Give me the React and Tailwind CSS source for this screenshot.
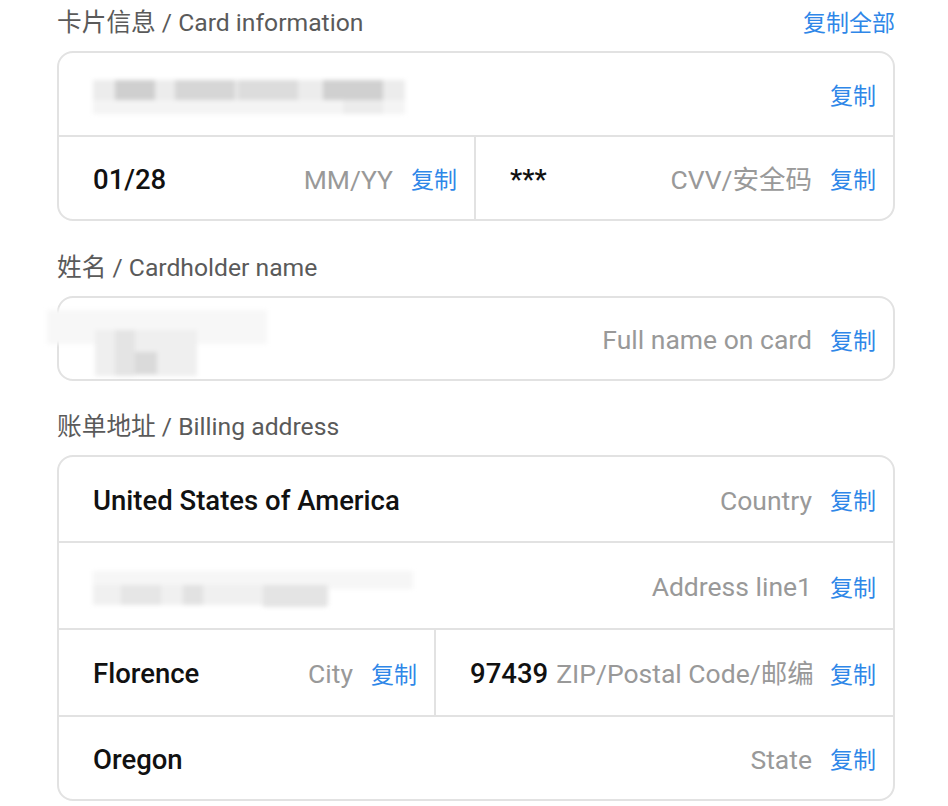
const font = { fontFamily: 'Roboto, "Noto Sans CJK SC", sans-serif' };

function CopyButton() {
  return (
    <button type="button" className="shrink-0 pt-[5px] text-[23px] leading-none text-[#2f87e8]">
      复制
    </button>
  );
}

function Field({ value, placeholder, children, className = "" }) {
  return (
    <div className={`flex h-full min-w-0 items-center pl-[34px] pr-[17px] pt-[3px] ${className}`}>
      {children ?? (
        <span className="shrink-0 whitespace-nowrap text-[27.5px] font-medium text-[#111]">{value}</span>
      )}
      <span className="min-w-0 flex-1 whitespace-nowrap pl-2 text-right text-[26.5px] text-[#999]">
        {placeholder}
      </span>
      <span className="ml-[18px]">
        <CopyButton />
      </span>
    </div>
  );
}

function Blur({ blocks, className = "" }) {
  return (
    <div className={`relative h-[44px] shrink-0 blur-[2px] ${className}`}>
      {blocks.map(([l, t, w, h, c], i) => (
        <div
          key={i}
          className="absolute"
          style={{ left: l, top: t, width: w, height: h, background: c }}
        />
      ))}
    </div>
  );
}

function SectionLabel({ children, right }) {
  return (
    <div className="mb-[12px] flex h-8 items-center justify-between">
      <h2 className="text-[24.7px] leading-8 text-[#5a5a5a]">{children}</h2>
      {right}
    </div>
  );
}

export default function App() {
  return (
    <main style={font} className="min-h-screen w-[948px] bg-white pl-[57px] pr-[53px] pt-[7px] pb-2">
      <section>
        <SectionLabel
          right={
            <button type="button" className="pt-[2px] text-[23px] text-[#2f87e8]">
              复制全部
            </button>
          }
        >
          卡片信息 / Card information
        </SectionLabel>
        <div className="h-[170px] overflow-hidden rounded-2xl border-2 border-[#e2e2e2]">
          <div className="h-[84px] border-b-2 border-[#e2e2e2]">
            <Field placeholder="" className="pl-[24px]">
              <Blur
                className="w-[312px]"
                blocks={[
                  [0, 6, 312, 22, "#ececec"],
                  [22, 6, 40, 20, "#cfcfcf"],
                  [82, 6, 60, 20, "#d6d6d6"],
                  [145, 6, 60, 20, "#dcdcdc"],
                  [230, 6, 60, 20, "#d0d0d0"],
                  [0, 26, 312, 14, "#f4f4f4"],
                  [250, 26, 40, 14, "#ececec"],
                ]}
              />
            </Field>
          </div>
          <div className="grid h-[82px] grid-cols-2">
            <Field value="01/28" placeholder="MM/YY" className="border-r-2 border-[#e2e2e2]" />
            <Field value="***" placeholder="CVV/安全码" className="pl-[33px]" />
          </div>
        </div>
      </section>

      <section className="mt-[31px]">
        <SectionLabel>姓名 / Cardholder name</SectionLabel>
        <div className="h-[85px] rounded-2xl border-2 border-[#e2e2e2]">
          <Field placeholder="Full name on card" className="pl-[24px]">
            <Blur
              className="-ml-[46px] h-[80px] w-[220px]"
              blocks={[
                [0, 10, 220, 34, "#f7f7f7"],
                [48, 30, 102, 46, "#efefef"],
                [68, 30, 20, 46, "#e4e4e4"],
                [88, 52, 22, 22, "#dadada"],
              ]}
            />
          </Field>
        </div>
      </section>

      <section className="mt-[30px]">
        <SectionLabel>账单地址 / Billing address</SectionLabel>
        <div className="h-[346px] overflow-hidden rounded-2xl border-2 border-[#e2e2e2]">
          <div className="h-[86px] border-b-2 border-[#e2e2e2]">
            <Field value="United States of America" placeholder="Country" />
          </div>
          <div className="h-[87px] border-b-2 border-[#e2e2e2]">
            <Field placeholder="Address line1" className="pl-[18px]">
              <Blur
                className="w-[320px]"
                blocks={[
                  [0, 6, 320, 18, "#f6f6f6"],
                  [0, 20, 236, 20, "#f0f0f0"],
                  [28, 20, 40, 20, "#e6e6e6"],
                  [90, 20, 20, 20, "#e2e2e2"],
                  [170, 20, 64, 22, "#e4e4e4"],
                ]}
              />
            </Field>
          </div>
          <div className="grid h-[87px] grid-cols-[377px_1fr] border-b-2 border-[#e2e2e2]">
            <Field value="Florence" placeholder="City" className="border-r-2 border-[#e2e2e2]" />
            <Field value="97439" placeholder="ZIP/Postal Code/邮编" className="pl-[33px]" />
          </div>
          <div className="h-[82px]">
            <Field value="Oregon" placeholder="State" />
          </div>
        </div>
      </section>
    </main>
  );
}
